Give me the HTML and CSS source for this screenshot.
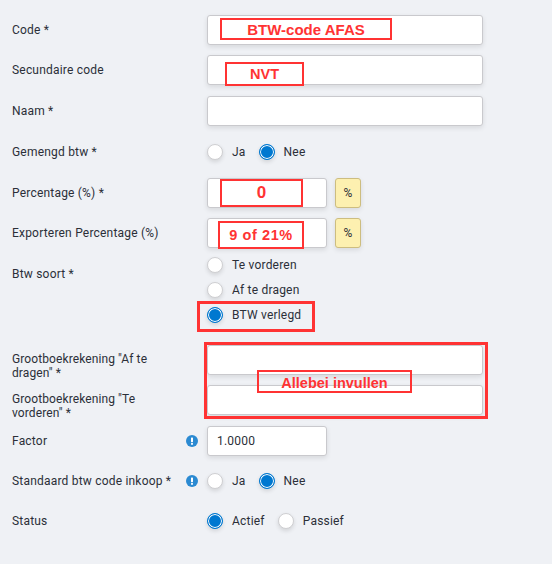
FILE: index.html
```html
<!DOCTYPE html>
<html lang="en">
<head>
  <meta charset="UTF-8">
  <meta name="viewport" content="width=device-width, initial-scale=1.0">
  <title>Btw code</title>
  <link rel="stylesheet" href="styles.css">
</head>
<body>
  <form class="form">
    <div class="row">
      <label class="label">Code *</label>
      <input class="field" type="text">
    </div>
    <div class="row">
      <label class="label">Secundaire code</label>
      <input class="field" type="text">
    </div>
    <div class="row">
      <label class="label">Naam *</label>
      <input class="field" type="text">
    </div>
    <div class="row row-gemengd">
      <label class="label">Gemengd btw *</label>
      <div class="radios">
        <label class="radio"><input type="radio" name="gemengd">Ja</label>
        <label class="radio"><input type="radio" name="gemengd" checked>Nee</label>
      </div>
    </div>
    <div class="row">
      <label class="label">Percentage (%) *</label>
      <input class="field small" type="text">
      <span class="addon">%</span>
    </div>
    <div class="row">
      <label class="label">Exporteren Percentage (%)</label>
      <input class="field small" type="text">
      <span class="addon">%</span>
    </div>
    <div class="row row-soort">
      <label class="label">Btw soort *</label>
      <div class="radio-stack">
        <label class="radio"><input type="radio" name="soort">Te vorderen</label>
        <label class="radio"><input type="radio" name="soort">Af te dragen</label>
        <label class="radio"><input type="radio" name="soort" checked>BTW verlegd</label>
      </div>
    </div>
    <div class="row">
      <label class="label label-wrap label-af">Grootboekrekening "Af te dragen" *</label>
      <input class="field" type="text">
    </div>
    <div class="row">
      <label class="label label-wrap label-te">Grootboekrekening "Te vorderen" *</label>
      <input class="field" type="text">
    </div>
    <div class="row">
      <label class="label">Factor
        <svg class="info" viewBox="0 0 12 12"><circle cx="6" cy="6" r="6" fill="#2b8ad2"/><rect x="5" y="2.4" width="2" height="4.8" rx=".6" fill="#fff"/><rect x="5" y="8" width="2" height="1.8" rx=".5" fill="#fff"/></svg>
      </label>
      <input class="field small" type="text" value="1.0000">
    </div>
    <div class="row">
      <label class="label">Standaard btw code inkoop *
        <svg class="info" viewBox="0 0 12 12"><circle cx="6" cy="6" r="6" fill="#2b8ad2"/><rect x="5" y="2.4" width="2" height="4.8" rx=".6" fill="#fff"/><rect x="5" y="8" width="2" height="1.8" rx=".5" fill="#fff"/></svg>
      </label>
      <div class="radios">
        <label class="radio"><input type="radio" name="inkoop">Ja</label>
        <label class="radio"><input type="radio" name="inkoop" checked>Nee</label>
      </div>
    </div>
    <div class="row">
      <label class="label">Status</label>
      <div class="radios">
        <label class="radio"><input type="radio" name="status" checked>Actief</label>
        <label class="radio"><input type="radio" name="status">Passief</label>
      </div>
    </div>
  </form>

  <!-- Rode aantekeningen over het formulier -->
  <div class="note note-code">BTW-code AFAS</div>
  <div class="note note-nvt">NVT</div>
  <div class="note note-zero">0</div>
  <div class="note note-export">9 of 21%</div>
  <div class="note note-verlegd"></div>
  <div class="note note-group"></div>
  <div class="note note-allebei">Allebei invullen</div>
</body>
</html>
```

FILE: styles.css
```css
body {
  margin: 0;
  background-color: #eff1f5;
  color: #2b2f38;
  font-family: Roboto, "Liberation Sans", Arial, sans-serif;
  font-size: 12px;
  letter-spacing: 0.2px;
  position: relative;
  height: 564px;
  overflow: hidden;
}

.form {
  padding: 14.8px 0 0 12px;
}

.row {
  display: flex;
  align-items: center;
  height: 30.4px;
  margin-bottom: 10px;
}

.row-gemengd {
  margin-top: 11px;
}

.row-soort {
  height: 82.5px;
  margin-top: -6px;
  align-items: flex-start;
}

.row-soort .label {
  margin-top: 15px;
}

.label {
  width: 186px;
  padding-right: 9px;
  line-height: 14px;
  display: flex;
  align-items: center;
  justify-content: space-between;
  flex-shrink: 0;
}

.label-wrap {
  width: 160px;
  padding-right: 35px;
  letter-spacing: 0.1px;
}

.label-af {
  margin-top: 12px;
}

.label-te {
  margin-top: 11px;
}

.info {
  width: 12px;
  height: 12px;
  flex-shrink: 0;
}

.field {
  box-sizing: border-box;
  width: 276px;
  height: 30px;
  margin: 0;
  padding: 0 9px;
  background-color: #fff;
  border: 1px solid #c9c9cd;
  border-radius: 3px;
  box-shadow: 0 2px 5px rgba(0, 0, 0, 0.1);
  font-family: inherit;
  font-size: 12px;
  letter-spacing: 0.2px;
  color: #2b2f38;
}

.field.small {
  width: 120px;
}

.addon {
  box-sizing: border-box;
  width: 26px;
  height: 30px;
  margin-left: 8px;
  display: flex;
  align-items: center;
  justify-content: center;
  background-color: #fdf0b0;
  border: 1px solid #cdbd80;
  border-radius: 3px;
  box-shadow: 0 2px 5px rgba(0, 0, 0, 0.1);
}

.radios {
  display: flex;
  gap: 13px;
}

.radio-stack {
  display: flex;
  flex-direction: column;
}

.radio-stack .radio {
  height: 25px;
}

.radio {
  display: flex;
  align-items: center;
}

.radio input {
  appearance: none;
  box-sizing: border-box;
  width: 16px;
  height: 16px;
  margin: 0 9px 0 0;
  background-color: #fff;
  border: 1px solid #cfcfd2;
  border-radius: 50%;
  box-shadow: 0 2px 4px rgba(0, 0, 0, 0.12);
}

.radio input:checked {
  background-color: #0078d0;
  border-color: #0078d0;
  box-shadow: inset 0 0 0 1px #fff, 0 2px 4px rgba(0, 0, 0, 0.12);
}

.note {
  position: absolute;
  box-sizing: border-box;
  display: flex;
  align-items: center;
  justify-content: center;
  border: 2px solid #ff3333;
  color: #ff3333;
  font-family: "Liberation Sans", Arial, sans-serif;
  font-size: 14.5px;
  font-weight: bold;
  letter-spacing: 0;
}

.note-code { left: 220px; top: 18px; width: 172px; height: 22px; font-size: 15px; }
.note-nvt { left: 225px; top: 62px; width: 79px; height: 24px; }
.note-zero { left: 220px; top: 179px; width: 83px; height: 28px; font-size: 17px; }
.note-export { left: 218px; top: 221px; width: 86px; height: 28px; letter-spacing: 0.6px; }
.note-verlegd { left: 197px; top: 301px; width: 118px; height: 31px; border-width: 3px; }
.note-group { left: 204px; top: 342px; width: 284px; height: 77px; border-width: 3px; }
.note-allebei { left: 257px; top: 370px; width: 155px; height: 23px; padding-top: 2px; }
```
